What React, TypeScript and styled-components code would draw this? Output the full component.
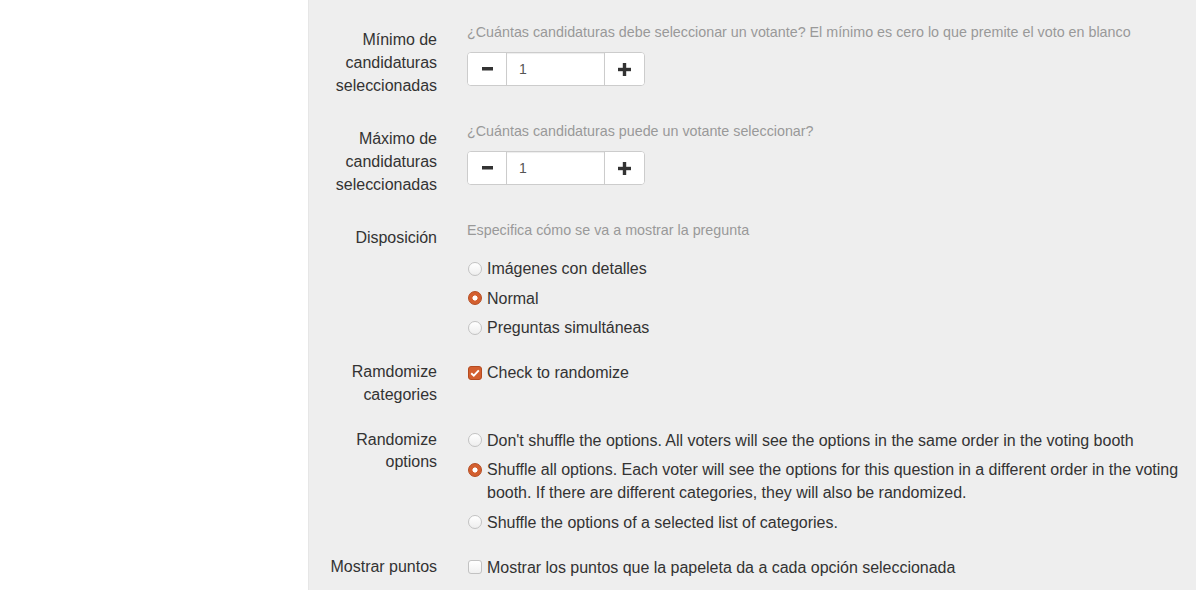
import * as React from 'react';
import styled, {createGlobalStyle} from 'styled-components';

const GlobalStyle = createGlobalStyle`
  html, body {
    margin: 0;
    padding: 0;
    background: #fff;
  }
  body {
    font-family: "Liberation Sans", Arial, Helvetica, sans-serif;
    color: #333;
  }
`;

const Page = styled.div`
  display: flex;
  min-height: 590px;
  overflow: hidden;
`;

const Sidebar = styled.aside`
  width: 308px;
  flex: none;
  background: #fff;
`;

const Panel = styled.main`
  flex: 1;
  background: #eee;
  padding: 22px 15px 0 0;
  border-left: 1px solid #e6e6e6;
`;

const Row = styled.div`
  display: grid;
  grid-template-columns: 143px 1fr;
  margin-bottom: 15px;
`;

const Label = styled.div`
  text-align: right;
  padding: 7px 15px 0;
  font-size: 16px;
  line-height: 22.8px;
  color: #333;
  letter-spacing: -0.02px;
`;

const Control = styled.div<{$pad?: boolean}>`
  padding: ${p => (p.$pad ? '7px' : '0')} 0 0 15px;
`;

const Hint = styled.div`
  font-size: 14.3px;
  line-height: 20px;
  color: #999;
  margin-bottom: 10px;
`;

const Stepper = styled.div`
  display: inline-flex;
  height: 34px;
  border: 1px solid #ccc;
  border-radius: 4px;
  background: #fff;
  margin-bottom: 20px;
  box-sizing: border-box;
  overflow: hidden;
`;

const StepButton = styled.button<{$w: number}>`
  width: ${p => p.$w}px;
  border: none;
  background: #fff;
  padding: 0;
  display: flex;
  align-items: center;
  justify-content: center;
  color: #333;
`;

const StepValue = styled.div`
  width: 99px;
  border-left: 1px solid #ccc;
  border-right: 1px solid #ccc;
  box-shadow: inset 0 1px 1px rgba(0, 0, 0, 0.075);
  font-size: 14px;
  line-height: 32px;
  padding-left: 12px;
  box-sizing: border-box;
  color: #555;
`;

const Options = styled.div<{$top?: number}>`
  display: flex;
  flex-direction: column;
  gap: 6.5px;
  padding-top: ${p => p.$top ?? 0}px;
`;

const Option = styled.label`
  display: flex;
  align-items: flex-start;
  font-size: 16px;
  line-height: 23px;
  color: #333;
  letter-spacing: -0.02px;
`;

const Radio = styled.span<{$checked?: boolean}>`
  flex: none;
  width: 14px;
  height: 14px;
  margin: 4.5px 5px 0 1px;
  border-radius: 50%;
  box-sizing: border-box;
  border: 1px solid ${p => (p.$checked ? '#b44b20' : '#c2c2c2')};
  background: ${p => (p.$checked
    ? 'radial-gradient(circle, #fff 0 2.2px, #d35f2f 2.9px)'
    : 'linear-gradient(#fff, #eeeeee)')};
`;

const Box = styled.span<{$checked?: boolean}>`
  flex: none;
  width: 14px;
  height: 14px;
  margin: 4.5px 5px 0 1px;
  border-radius: 3px;
  box-sizing: border-box;
  border: 1px solid ${p => (p.$checked ? '#b44b20' : '#c2c2c2')};
  background: ${p => (p.$checked ? '#d35f2f' : 'linear-gradient(#fff, #f0f0f0)')};
  display: flex;
  align-items: center;
  justify-content: center;
`;

const Minus = () => (
  <svg width="11" height="4" viewBox="0 0 11 4">
    <rect x="0" y="0" width="11" height="3.5" fill="#333"/>
  </svg>
);

const Plus = () => (
  <svg width="13" height="13" viewBox="0 0 13 13">
    <rect x="0" y="4.8" width="13" height="3.4" fill="#333"/>
    <rect x="4.8" y="0" width="3.4" height="13" fill="#333"/>
  </svg>
);

const Check = () => (
  <svg width="10" height="8" viewBox="0 0 10 8">
    <path d="M1.2 4.2 L3.8 6.6 L8.8 1.4" fill="none" stroke="#fff" strokeWidth="1.9"/>
  </svg>
);

const NumberField = ({value}: {value: number}) => (
  <Stepper>
    <StepButton $w={38}><Minus/></StepButton>
    <StepValue>{value}</StepValue>
    <StepButton $w={39}><Plus/></StepButton>
  </Stepper>
);

const layouts = ['Imágenes con detalles', 'Normal', 'Preguntas simultáneas'];
const shuffles = [
  "Don't shuffle the options. All voters will see the options in the same order in the voting booth",
  'Shuffle all options. Each voter will see the options for this question in a different order in the voting booth. If there are different categories, they will also be randomized.',
  'Shuffle the options of a selected list of categories.',
];

const App = () => {
  return (
    <Page>
      <GlobalStyle/>
      <Sidebar/>
      <Panel>
        <Row>
          <Label>Mínimo de candidaturas seleccionadas</Label>
          <Control>
            <Hint>¿Cuántas candidaturas debe seleccionar un votante? El mínimo es cero lo que premite el voto en blanco</Hint>
            <NumberField value={1}/>
          </Control>
        </Row>
        <Row>
          <Label>Máximo de candidaturas seleccionadas</Label>
          <Control>
            <Hint>¿Cuántas candidaturas puede un votante seleccionar?</Hint>
            <NumberField value={1}/>
          </Control>
        </Row>
        <Row>
          <Label>Disposición</Label>
          <Control>
            <Hint>Especifica cómo se va a mostrar la pregunta</Hint>
            <Options $top={7}>
              {layouts.map(l => (
                <Option key={l}><Radio $checked={l === 'Normal'}/><span>{l}</span></Option>
              ))}
            </Options>
          </Control>
        </Row>
        <Row>
          <Label>Ramdomize categories</Label>
          <Control $pad>
            <Option><Box $checked><Check/></Box><span>Check to randomize</span></Option>
          </Control>
        </Row>
        <Row>
          <Label>Randomize options</Label>
          <Control $pad>
            <Options>
              {shuffles.map((s, i) => (
                <Option key={i}><Radio $checked={i === 1}/><span>{s}</span></Option>
              ))}
            </Options>
          </Control>
        </Row>
        <Row>
          <Label>Mostrar puntos</Label>
          <Control $pad>
            <Option><Box/><span>Mostrar los puntos que la papeleta da a cada opción seleccionada</span></Option>
          </Control>
        </Row>
      </Panel>
    </Page>
  );
};

export default App;
